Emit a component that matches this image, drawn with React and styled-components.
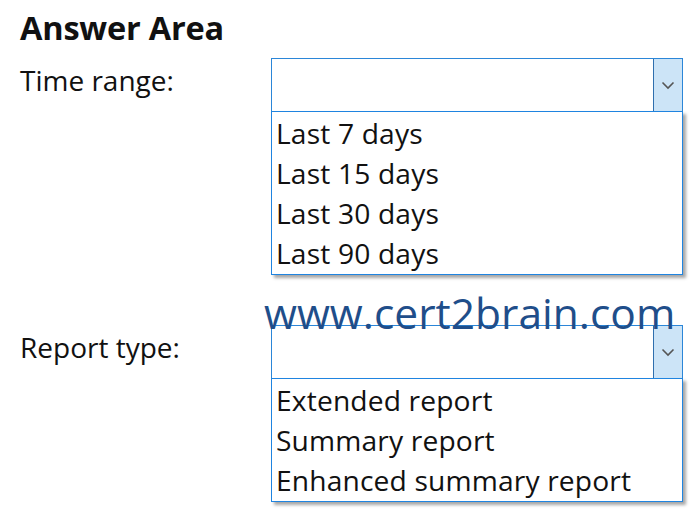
import React from 'react';
import styled, { createGlobalStyle } from 'styled-components';

const GlobalStyle = createGlobalStyle`
    html, body {
        margin: 0;
        padding: 0;
        background: #ffffff;
    }
    body {
        font-family: "Open Sans", "Liberation Sans", sans-serif;
        color: #111111;
    }
`;

const timeOptions = ['Last 7 days', 'Last 15 days', 'Last 30 days', 'Last 90 days'];
const reportOptions = ['Extended report', 'Summary report', 'Enhanced summary report'];

const ChevronDown = () => (
    <svg width="14" height="9" viewBox="0 0 14 9">
        <path d="M1.5 1.5 L7 7 L12.5 1.5" fill="none" stroke="#555" strokeWidth="1.6" />
    </svg>
);

const Dropdown = ({ options }) => (
    <DropWrapper>
        <Header>
            <ArrowBtn>
                <ChevronDown />
            </ArrowBtn>
        </Header>
        <List>
            {options.map((o) => (
                <Option key={o}>{o}</Option>
            ))}
        </List>
    </DropWrapper>
);

const App = () => {
    return (
        <Page>
            <GlobalStyle />
            <Title>Answer Area</Title>
            <Row>
                <Label>Time range:</Label>
                <Dropdown options={timeOptions} />
            </Row>
            <Row $second>
                <Label>Report type:</Label>
                <Dropdown options={reportOptions} />
                <Watermark>www.cert2brain.com</Watermark>
            </Row>
        </Page>
    );
};

export default App;


const Page = styled.div`
    width: 698px;
    height: 525px;
    padding: 8px 0 0 20px;
    box-sizing: border-box;
    display: flex;
    flex-direction: column;
`;
const Title = styled.h1`
    margin: 0;
    font-size: 32.5px;
    font-weight: 700;
    line-height: 40px;
    letter-spacing: -0.2px;
`;
const Row = styled.div`
    position: relative;
    display: grid;
    grid-template-columns: 251px 412px;
    align-items: start;
    margin-top: ${(p) => (p.$second ? '50px' : '10px')};
`;
const Label = styled.div`
    font-size: 28px;
    line-height: 54px;
    margin-top: ${(p) => (p.$low ? '-3px' : '-5px')};
`;
const DropWrapper = styled.div`
    display: flex;
    flex-direction: column;
    width: 412px;
`;
const Header = styled.div`
    height: 54px;
    box-sizing: border-box;
    border: 1.5px solid #2b86d8;
    display: flex;
    justify-content: flex-end;
    background: #ffffff;
`;
const ArrowBtn = styled.div`
    width: 29px;
    height: 100%;
    box-sizing: border-box;
    border-left: 1.5px solid #2f6fae;
    background: #cce4f7;
    display: flex;
    align-items: center;
    justify-content: center;
`;
const List = styled.div`
    margin-top: -1px;
    box-sizing: border-box;
    border: 1.5px solid #1f84e0;
    padding: 1px 0 1px 4px;
    box-shadow: 3px 3px 3px rgba(0, 0, 0, 0.35);
    background: #ffffff;
`;
const Option = styled.div`
    font-size: 28.2px;
    line-height: 40px;
    white-space: nowrap;
    letter-spacing: 0.15px;
`;
const Watermark = styled.div`
    position: absolute;
    left: 244px;
    top: -38px;
    font-size: 42.5px;
    line-height: 52px;
    color: #1f4e8a;
    white-space: nowrap;
    pointer-events: none;
`;
